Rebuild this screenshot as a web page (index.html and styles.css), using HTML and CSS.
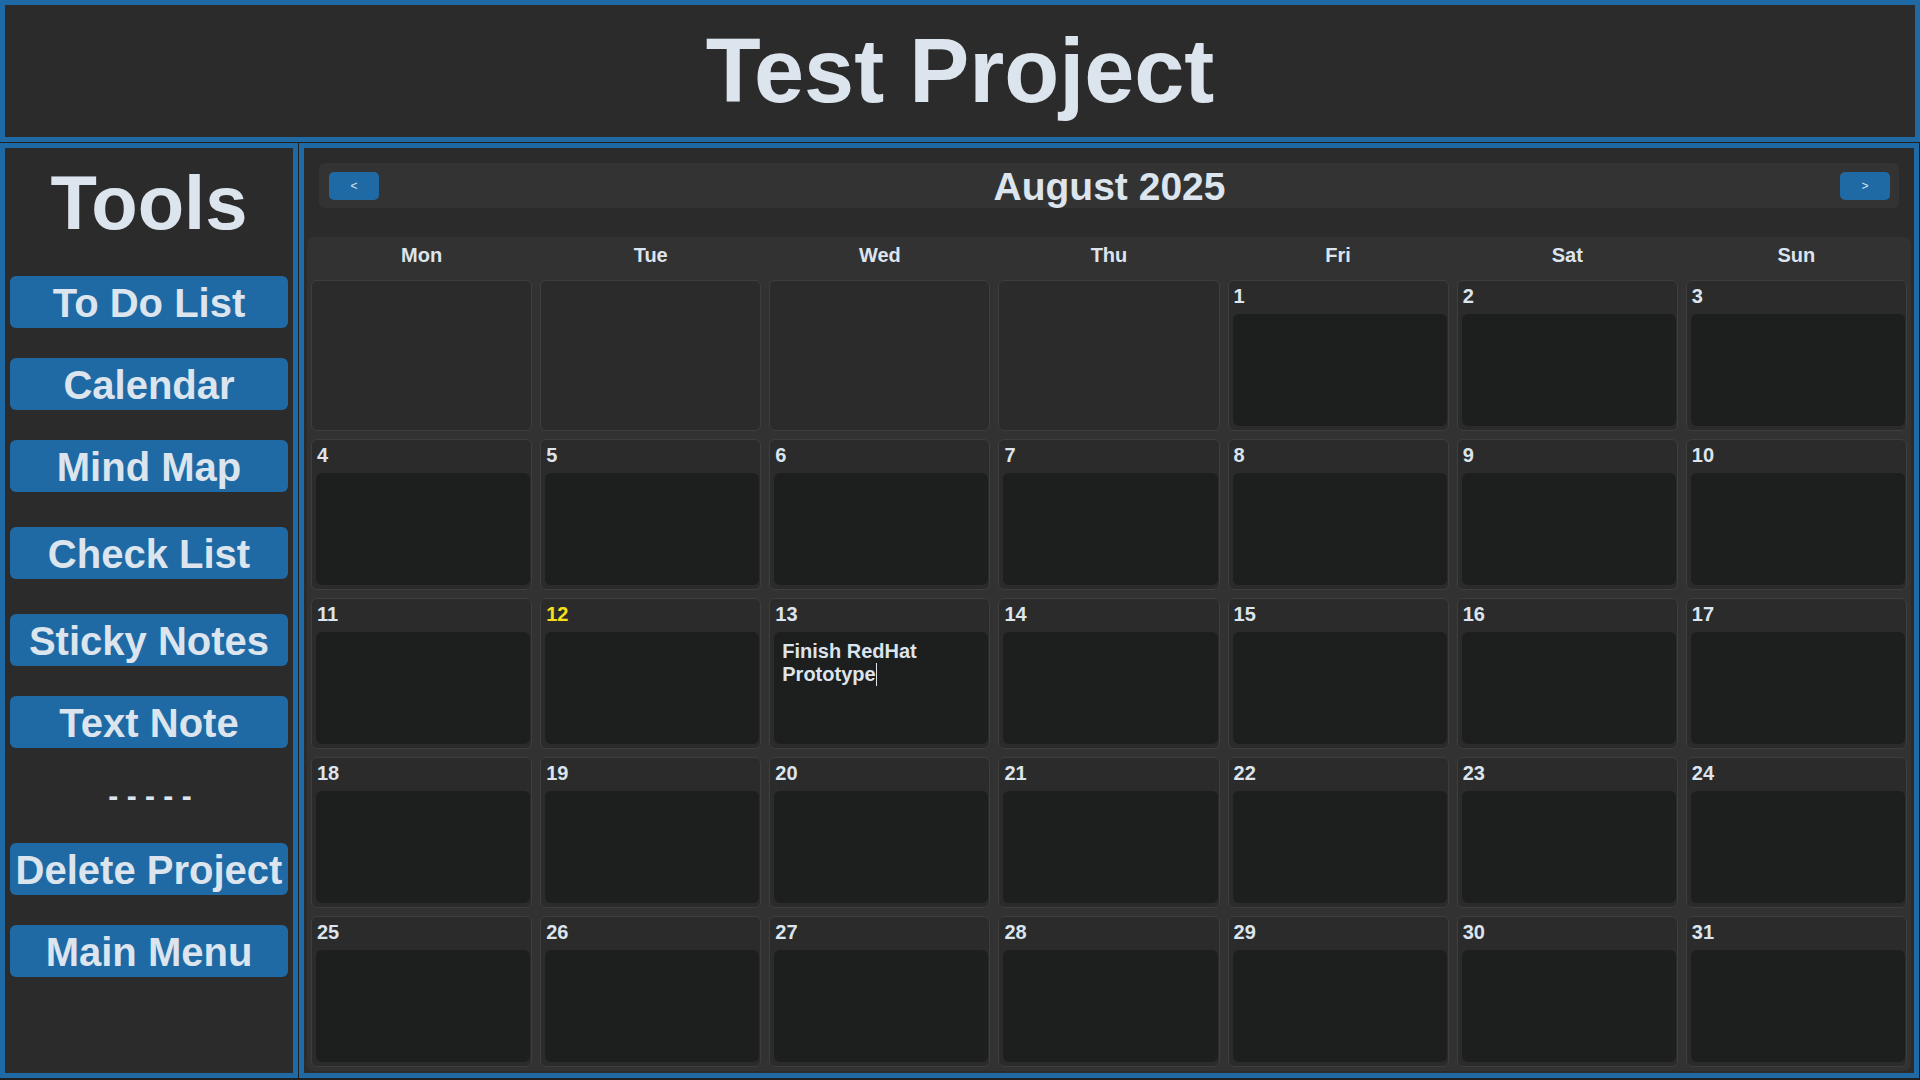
FILE: index.html
```html
<!DOCTYPE html>
<html lang="en">
<head>
<meta charset="utf-8">
<title>Test Project</title>
<link rel="stylesheet" href="styles.css">
</head>
<body>
<header class="topbar"><h1 class="project-title">Test Project</h1></header>
<div class="main">
  <aside class="sidebar">
    <div class="tools-title">Tools</div>
    <button class="tool-btn">To Do List</button>
    <button class="tool-btn">Calendar</button>
    <button class="tool-btn">Mind Map</button>
    <button class="tool-btn extra">Check List</button>
    <button class="tool-btn extra">Sticky Notes</button>
    <button class="tool-btn">Text Note</button>
    <div class="divider">- - - - -</div>
    <button class="tool-btn">Delete Project</button>
    <button class="tool-btn">Main Menu</button>
  </aside>
  <section class="calendar">
    <div class="cal-nav">
      <button class="nav-btn">&lt;</button>
      <div class="month-title">August 2025</div>
      <button class="nav-btn">&gt;</button>
    </div>
    <div class="cal-grid">
      <div class="wd">Mon</div><div class="wd">Tue</div><div class="wd">Wed</div><div class="wd">Thu</div><div class="wd">Fri</div><div class="wd">Sat</div><div class="wd">Sun</div>
      <div class="cell empty"></div><div class="cell empty"></div><div class="cell empty"></div><div class="cell empty"></div>
      <div class="cell"><div class="num">1</div><div class="note"></div></div>
      <div class="cell"><div class="num">2</div><div class="note"></div></div>
      <div class="cell"><div class="num">3</div><div class="note"></div></div>
      <div class="cell"><div class="num">4</div><div class="note"></div></div>
      <div class="cell"><div class="num">5</div><div class="note"></div></div>
      <div class="cell"><div class="num">6</div><div class="note"></div></div>
      <div class="cell"><div class="num">7</div><div class="note"></div></div>
      <div class="cell"><div class="num">8</div><div class="note"></div></div>
      <div class="cell"><div class="num">9</div><div class="note"></div></div>
      <div class="cell"><div class="num">10</div><div class="note"></div></div>
      <div class="cell"><div class="num">11</div><div class="note"></div></div>
      <div class="cell"><div class="num today">12</div><div class="note"></div></div>
      <div class="cell"><div class="num">13</div><div class="note">Finish RedHat Prototype<span class="caret"></span></div></div>
      <div class="cell"><div class="num">14</div><div class="note"></div></div>
      <div class="cell"><div class="num">15</div><div class="note"></div></div>
      <div class="cell"><div class="num">16</div><div class="note"></div></div>
      <div class="cell"><div class="num">17</div><div class="note"></div></div>
      <div class="cell"><div class="num">18</div><div class="note"></div></div>
      <div class="cell"><div class="num">19</div><div class="note"></div></div>
      <div class="cell"><div class="num">20</div><div class="note"></div></div>
      <div class="cell"><div class="num">21</div><div class="note"></div></div>
      <div class="cell"><div class="num">22</div><div class="note"></div></div>
      <div class="cell"><div class="num">23</div><div class="note"></div></div>
      <div class="cell"><div class="num">24</div><div class="note"></div></div>
      <div class="cell"><div class="num">25</div><div class="note"></div></div>
      <div class="cell"><div class="num">26</div><div class="note"></div></div>
      <div class="cell"><div class="num">27</div><div class="note"></div></div>
      <div class="cell"><div class="num">28</div><div class="note"></div></div>
      <div class="cell"><div class="num">29</div><div class="note"></div></div>
      <div class="cell"><div class="num">30</div><div class="note"></div></div>
      <div class="cell"><div class="num">31</div><div class="note"></div></div>
    </div>
  </section>
</div>
</body>
</html>
```
FILE: styles.css
```css
* { box-sizing: border-box; }
html, body { margin: 0; padding: 0; }
body {
  width: 1920px;
  height: 1080px;
  overflow: hidden;
  background: #202020;
  font-family: "Liberation Sans", Arial, sans-serif;
  font-weight: bold;
  color: #dce4ee;
}
.topbar {
  height: 142px;
  border: 5px solid #1f6aa5;
  background: #2b2b2b;
  padding-top: 15px;
  text-align: center;
}
.project-title {
  margin: 0;
  font-size: 90px;
  line-height: normal;
  font-weight: bold;
}
.main {
  display: flex;
  gap: 1px;
  margin-top: 1px;
  height: 935px;
}
.sidebar {
  width: 298px;
  flex: none;
  border: 5px solid #1f6aa5;
  background: #2b2b2b;
  display: flex;
  flex-direction: column;
  align-items: stretch;
  gap: 30px;
  padding: 11px 5px 0;
}
.tools-title {
  font-size: 76px;
  line-height: normal;
  text-align: center;
}
.tool-btn {
  font-family: inherit;
  font-weight: bold;
  font-size: 40px;
  line-height: normal;
  color: #dce4ee;
  background: #1f6aa5;
  border: none;
  border-radius: 6px;
  padding: 4px 0 2px;
  height: 52px;
  white-space: nowrap;
  text-align: center;
}
.tool-btn.extra { margin-top: 5px; }
.divider {
  font-size: 30px;
  line-height: 35px;
  text-align: center;
  margin: 0;
  padding-left: 2px;
}
.calendar {
  width: 1620px;
  flex: none;
  border: 5px solid #1f6aa5;
  background: #2b2b2b;
  display: flex;
  flex-direction: column;
}
.cal-nav {
  margin: 15px 15px 0;
  height: 45px;
  background: #333333;
  border-radius: 6px;
  display: flex;
  align-items: center;
  justify-content: space-between;
  padding: 0 9px 0 10px;
}
.nav-btn {
  width: 50px;
  height: 28px;
  background: #1f6aa5;
  color: #dce4ee;
  border: none;
  border-radius: 5px;
  font-family: inherit;
  font-size: 12px;
  font-weight: normal;
  padding: 0;
}
.month-title {
  font-size: 39px;
  line-height: normal;
  padding-top: 3px;
}
.cal-grid {
  flex: 1;
  margin: 29px 3px 2px;
  background: #323232;
  border-radius: 7px;
  padding: 7px 4px 4px;
  display: grid;
  grid-template-columns: repeat(7, 1fr);
  grid-template-rows: auto repeat(5, 1fr);
  gap: 8px;
}
.wd {
  font-size: 20px;
  line-height: 23px;
  text-align: center;
  padding-bottom: 5px;
}
.cell {
  border: 1px solid #3e3e3e;
  border-radius: 6px;
  background: #2b2b2b;
  padding: 4px 1px 4px 4px;
  display: flex;
  flex-direction: column;
  min-height: 0;
}
.num {
  font-size: 20px;
  line-height: 23px;
  margin-bottom: 6px;
  padding-left: 1px;
}
.num.today { color: #f7e017; }
.note {
  flex: 1;
  background: #1d1e1e;
  border-radius: 6px;
  padding: 8px 60px 8px 8px;
  font-size: 20px;
  line-height: normal;
  color: #dce4ee;
}
.caret {
  display: inline-block;
  width: 1px;
  height: 23px;
  background: #dce4ee;
  vertical-align: -5px;
}
```
